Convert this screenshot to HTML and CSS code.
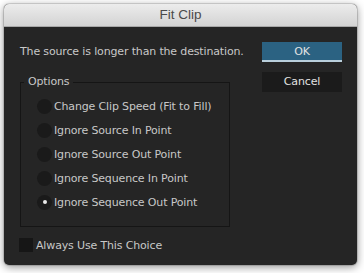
FILE: index.html
```html
<!DOCTYPE html>
<html>
<head>
<meta charset="utf-8">
<link rel="stylesheet" href="styles.css">
</head>
<body>
<div class="window">
  <div class="titlebar">Fit Clip</div>
  <div class="content">
    <div class="main">
      <div class="message">The source is longer than the destination.</div>
      <fieldset class="options">
        <legend class="legend">Options</legend>
        <div class="row"><span class="radio"></span><span class="label">Change Clip Speed (Fit to Fill)</span></div>
        <div class="row"><span class="radio"></span><span class="label">Ignore Source In Point</span></div>
        <div class="row"><span class="radio"></span><span class="label">Ignore Source Out Point</span></div>
        <div class="row"><span class="radio"></span><span class="label">Ignore Sequence In Point</span></div>
        <div class="row"><span class="radio checked"></span><span class="label">Ignore Sequence Out Point</span></div>
      </fieldset>
      <div class="check-row"><span class="checkbox"></span><span class="label">Always Use This Choice</span></div>
    </div>
    <div class="buttons">
      <div class="btn ok">OK</div>
      <div class="btn cancel">Cancel</div>
    </div>
  </div>
</div>
</body>
</html>
```
FILE: styles.css
```css
html, body {
  margin: 0;
  padding: 0;
}
body {
  background: #ffffff;
  width: 364px;
  height: 273px;
  overflow: hidden;
  font-family: "DejaVu Sans", sans-serif;
  font-size: 11px;
  letter-spacing: -0.15px;
}
.window {
  margin: 4px 0 0 4px;
  width: 353px;
  height: 261px;
  border-radius: 5px;
  overflow: hidden;
  background: #252525;
  box-shadow: 0 2px 8px rgba(0,0,0,0.45), 0 0 0 1px rgba(0,0,0,0.12);
  display: flex;
  flex-direction: column;
}
.titlebar {
  height: 22px;
  line-height: 22px;
  text-align: center;
  font-family: "Liberation Sans", sans-serif;
  font-size: 13.5px;
  letter-spacing: 0;
  color: #4a4a4a;
  background: linear-gradient(#ececec, #d3d3d3);
  border-bottom: 1px solid #a8a8a8;
  flex: none;
}
.content {
  display: flex;
  padding: 15px 15px 0 16px;
}
.main {
  flex: 1;
  color: #c8c8c8;
}
.message {
  line-height: 20px;
  margin-bottom: 13px;
  white-space: nowrap;
}
.options {
  margin: 0;
  width: 210px;
  box-sizing: border-box;
  border: 1px solid #151515;
  padding: 5px 0 12px 3px;
}
.legend {
  padding: 0 4px;
  line-height: 14px;
  color: #c8c8c8;
}
.row {
  height: 24px;
  display: flex;
  align-items: center;
  gap: 2px;
  padding-left: 13px;
}
.radio {
  width: 15px;
  height: 15px;
  border-radius: 50%;
  background: #1a1a1a;
  flex: none;
  display: flex;
  align-items: center;
  justify-content: center;
}
.radio.checked::after {
  content: "";
  width: 4px;
  height: 4px;
  border-radius: 50%;
  background: #e8e8e8;
}
.label {
  white-space: nowrap;
}
.check-row {
  margin-top: 8px;
  height: 20px;
  display: flex;
  align-items: center;
  gap: 3px;
  margin-left: -1px;
}
.checkbox {
  width: 14px;
  height: 14px;
  background: #161616;
  flex: none;
}
.buttons {
  width: 80px;
  display: flex;
  flex-direction: column;
  gap: 10px;
}
.btn {
  height: 20px;
  line-height: 20px;
  text-align: center;
  color: #e2e2e2;
  box-sizing: border-box;
}
.ok {
  background: #2b6282;
  border-bottom: 2px solid #b9cfdc;
  line-height: 19px;
}
.cancel {
  background: #1b1b1b;
}
```
